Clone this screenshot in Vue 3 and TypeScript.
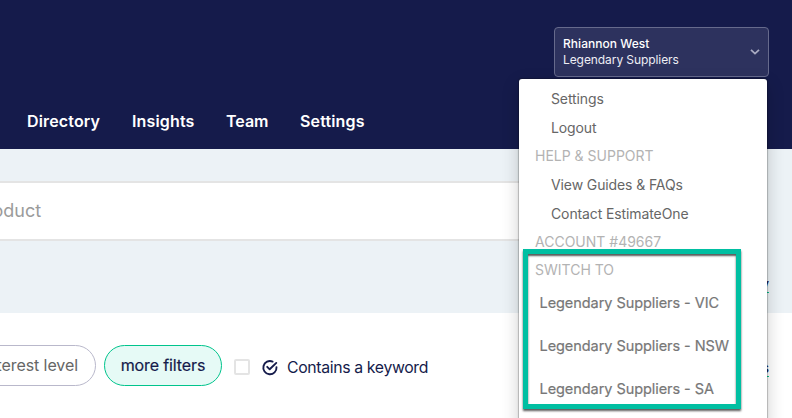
<script setup lang="ts">
interface MenuEntry {
  label: string
  kind: 'item' | 'heading'
}

const navigation: { label: string; name: string }[] = [
  { label: 'Directory', name: 'directory' },
  { label: 'Insights', name: 'insights' },
  { label: 'Team', name: 'team' },
  { label: 'Settings', name: 'settings' },
]

const menu: MenuEntry[] = [
  { label: 'Settings', kind: 'item' },
  { label: 'Logout', kind: 'item' },
  { label: 'HELP & SUPPORT', kind: 'heading' },
  { label: 'View Guides & FAQs', kind: 'item' },
  { label: 'Contact EstimateOne', kind: 'item' },
  { label: 'ACCOUNT #49667', kind: 'heading' },
  { label: 'SWITCH TO', kind: 'heading' },
]

const companies: string[] = [
  'Legendary Suppliers - VIC',
  'Legendary Suppliers - NSW',
  'Legendary Suppliers - SA',
]
</script>

<template>
  <div class="page">
    <header class="header">
      <div class="account">
        <div class="account-text">
          <div class="account-name">Rhiannon West</div>
          <div class="account-company">Legendary Suppliers</div>
        </div>
        <svg class="chevron" viewBox="0 0 10 6" width="10" height="6">
          <path d="M1 0.8 L5 4.6 L9 0.8" fill="none" stroke="#a9abc2" stroke-width="1.8" />
        </svg>
      </div>
      <nav class="nav">
        <a v-for="n in navigation" :key="n.name" class="nav-link" :class="n.name">{{ n.label }}</a>
      </nav>
    </header>

    <section class="search">
      <div class="search-box"><span class="search-text">product</span></div>
      <div class="link-row"><a class="link">Search history</a></div>
    </section>

    <section class="filters">
      <div class="pill interest"><span>interest level</span></div>
      <div class="pill more"><span>more filters</span></div>
      <span class="checkbox"></span>
      <svg class="tick" viewBox="0 0 18 18" width="18" height="18">
        <path d="M11.6 2.6 A6.6 6.6 0 1 0 15.5 8.1" fill="none" stroke="#151b4b" stroke-width="1.9" stroke-linecap="round" />
        <path d="M6.2 7.8 L8.7 10.3 L15.3 3.9" fill="none" stroke="#151b4b" stroke-width="1.9" stroke-linecap="round" stroke-linejoin="round" />
      </svg>
      <span class="keyword">Contains a keyword</span>
      <a class="link filter-link">Clear filters</a>
    </section>

    <aside class="menu">
      <div v-for="m in menu" :key="m.label" :class="m.kind"><span>{{ m.label }}</span></div>
      <div class="companies">
        <div v-for="c in companies" :key="c" class="company">{{ c }}</div>
      </div>
    </aside>
    <div class="highlight"></div>
  </div>
</template>

<style>
body {
  margin: 0;
  overflow: hidden;
}
</style>

<style scoped>
.page {
  position: relative;
  width: 792px;
  height: 418px;
  overflow: hidden;
  background: #fff;
  font-family: Inter, "Liberation Sans", sans-serif;
  white-space: nowrap;
  box-sizing: border-box;
}
.page * {
  box-sizing: border-box;
}
.header {
  height: 149px;
  padding: 27px 23px 0 27px;
  background: #151b4b;
  display: flex;
  flex-direction: column;
}
.account {
  align-self: flex-end;
  width: 215px;
  height: 50px;
  padding: 0 8px;
  display: flex;
  align-items: center;
  justify-content: space-between;
  border: 1px solid #666a8c;
  border-radius: 4px;
  background: #2d325e;
  color: #fff;
  font-size: 12px;
  line-height: 16px;
}
.account-name {
  font-weight: 500;
  letter-spacing: 0.04px;
}
.account-company {
  color: #eeeef4;
  letter-spacing: -0.08px;
}
.nav {
  display: flex;
  gap: 32px;
  margin-top: 34px;
  color: #fff;
  font-size: 16px;
  font-weight: 600;
  line-height: 20px;
  letter-spacing: 0.15px;
}
.directory { width: 73px; }
.insights { width: 62px; }
.team { width: 42px; letter-spacing: 0; }
.search {
  height: 164px;
  padding-top: 32px;
  background: #ecf2f6;
}
.search-box {
  height: 60px;
  width: 700px;
  display: flex;
  align-items: center;
  padding-bottom: 2px;
  border: 2px solid #e4e4e4;
  border-width: 2px 0;
  background: #fff;
  color: #9b9b9b;
  font-size: 18px;
}
.search-text {
  margin-left: -25px;
}
.link-row {
  display: flex;
  justify-content: flex-end;
  padding: 34px 23px 0 0;
}
.link {
  color: #151b4b;
  font-size: 14px;
  font-weight: 500;
  line-height: 17px;
  border-bottom: 1px solid #00c48c;
}
.filters {
  display: flex;
  align-items: center;
  height: 105px;
  color: #151b4b;
  font-size: 16px;
}
.pill {
  height: 41px;
  display: flex;
  align-items: center;
  justify-content: flex-end;
  padding-bottom: 2px;
  border: 1px solid #b9b8cb;
  border-radius: 21px;
}
.interest {
  width: 136px;
  margin-left: -40px;
  padding-right: 17px;
  color: #666;
  letter-spacing: -0.08px;
}
.more {
  width: 118px;
  margin-left: 8px;
  justify-content: center;
  border-color: #00c48c;
  background: #e6faf6;
  letter-spacing: -0.12px;
  -webkit-text-stroke: 0.2px #151b4b;
}
.checkbox {
  width: 16px;
  height: 16px;
  margin: 3px 0 0 12px;
  border: 2px solid #e4e4e4;
  border-radius: 2px;
}
.tick {
  margin: 4px 0 0 11px;
}
.keyword {
  margin: 3px 0 0 8px;
  font-size: 15.8px;
  letter-spacing: -0.35px;
}
.filter-link {
  margin: 4px 23px 0 auto;
}
.menu {
  position: absolute;
  left: 519px;
  top: 79px;
  width: 248px;
  height: 350px;
  padding-top: 5px;
  border-radius: 3px;
  background: #fff;
  box-shadow: 0 0 1px 1px rgba(0, 0, 0, 0.22), 0 6px 18px rgba(0, 0, 0, 0.2);
  font-size: 14px;
}
.item {
  height: 29px;
  padding-left: 32px;
  line-height: 29px;
  color: #666;
  letter-spacing: -0.11px;
}
.heading {
  height: 28px;
  padding-left: 16px;
  line-height: 27px;
  color: #b3b3b3;
}
.companies {
  margin-top: -3px;
  padding-left: 20.5px;
}
.company {
  height: 43px;
  line-height: 43px;
  color: #777;
  font-size: 14.5px;
  letter-spacing: -0.06px;
  -webkit-text-stroke: 0.2px #777;
}
.highlight {
  position: absolute;
  left: 523px;
  top: 249px;
  width: 218px;
  height: 160px;
  border: 5px solid #00bfa2;
  box-shadow: 0 2px 2px rgba(0, 0, 0, 0.65), inset 0 2px 2px rgba(0, 0, 0, 0.65);
}
</style>
